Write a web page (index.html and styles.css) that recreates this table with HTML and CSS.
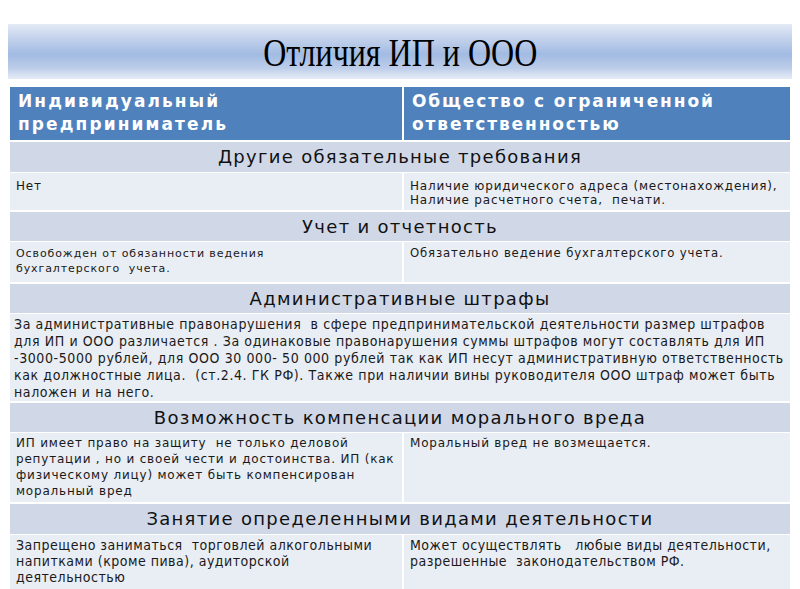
FILE: index.html
```html
<!DOCTYPE html>
<html lang="ru">
<head>
<meta charset="utf-8">
<link rel="stylesheet" href="styles.css">
</head>
<body>
<div class="slide">
  <div class="banner"><h1 class="title">Отличия ИП и ООО</h1></div>
  <div class="table">
    <div class="row head">
      <div class="cell">Индивидуальный<br>предприниматель</div>
      <div class="cell">Общество с ограниченной<br>ответственностью</div>
    </div>
    <div class="sect tall">Другие обязательные требования</div>
    <div class="row data r1">
      <div class="cell">Нет</div>
      <div class="cell">Наличие юридического адреса (местонахождения),<br>Наличие расчетного счета,&nbsp; печати.</div>
    </div>
    <div class="sect">Учет и отчетность</div>
    <div class="row data r2">
      <div class="cell">Освобожден от обязанности ведения<br>бухгалтерского&nbsp; учета.</div>
      <div class="cell alt">Обязательно ведение бухгалтерского учета.</div>
    </div>
    <div class="sect">Административные штрафы</div>
    <div class="row data r3">
      <div class="cell wide">За административные правонарушения&nbsp; в сфере предпринимательской деятельности размер штрафов<br>для ИП и ООО различается . За одинаковые правонарушения суммы штрафов могут составлять для ИП<br>-3000-5000 рублей, для ООО 30 000- 50 000 рублей так как ИП несут административную ответственность<br>как должностные лица.&nbsp; (ст.2.4. ГК РФ). Также при наличии вины руководителя ООО штраф может быть<br>наложен и на него.</div>
    </div>
    <div class="sect">Возможность компенсации морального вреда</div>
    <div class="row data r4">
      <div class="cell">ИП имеет право на защиту&nbsp; не только деловой<br>репутации , но и своей чести и достоинства. ИП (как<br>физическому лицу) может быть компенсирован<br>моральный вред</div>
      <div class="cell">Моральный вред не возмещается.</div>
    </div>
    <div class="sect tall">Занятие определенными видами деятельности</div>
    <div class="row data r5">
      <div class="cell">Запрещено заниматься&nbsp; торговлей алкогольными<br>напитками (кроме пива), аудиторской<br>деятельностью</div>
      <div class="cell">Может осуществлять&nbsp;&nbsp; любые виды деятельности,<br>разрешенные&nbsp; законодательством РФ.</div>
    </div>
  </div>
</div>
</body>
</html>
```
FILE: styles.css
```css
html, body {
  margin: 0;
  padding: 0;
  background: #ffffff;
}
*, *::before, *::after {
  box-sizing: border-box;
}
body {
  width: 800px;
  height: 589px;
  overflow: hidden;
  font-family: "DejaVu Sans", Verdana, sans-serif;
  color: #000;
}
.slide {
  padding: 24px 8px 0 8px;
  display: flex;
  flex-direction: column;
}
.banner {
  height: 55px;
  background: linear-gradient(to bottom, #e3e9f5 0%, #b9cbe9 35%, #a2bbe2 55%, #bccde9 80%, #e6ecf6 100%);
  display: flex;
  align-items: center;
  justify-content: center;
}
.title {
  margin: 2px 0 0 0;
  font-family: "Liberation Serif", "Times New Roman", serif;
  font-weight: normal;
  font-size: 40px;
  line-height: 1;
  transform: scaleX(0.8);
  color: #000;
}
.table {
  margin: 8px 2px 0 2px;
  display: flex;
  flex-direction: column;
  gap: 1px;
}
.row {
  display: grid;
  grid-template-columns: 392px 1fr;
  gap: 2px;
  margin-bottom: 1px;
}
.cell {
  padding: 4px 6px;
}
.head .cell {
  background: #4f81bd;
  color: #fff;
  font-weight: bold;
  font-size: 17px;
  line-height: 23px;
  height: 53px;
  padding: 3px 8px 0 8px;
}
.head .cell:first-child {
  letter-spacing: 2.1px;
}
.head .cell:last-child {
  letter-spacing: 1.9px;
}
.sect {
  background: #d0d8e8;
  text-align: center;
  font-size: 18px;
  letter-spacing: 1.3px;
  height: 29px;
  line-height: 29px;
  color: #111;
}
.sect.tall {
  height: 30px;
  line-height: 30px;
}
.data .cell {
  background: #e9edf4;
  color: #1a1a1a;
}
.r1 .cell {
  height: 37px;
  font-size: 12px;
  letter-spacing: 0.8px;
  line-height: 14px;
  padding: 6px 6px 0 6px;
}
.r2 .cell {
  height: 40px;
  font-size: 11px;
  letter-spacing: 0.9px;
  line-height: 15px;
  padding: 4px 6px 0 6px;
}
.r2 .cell.alt {
  font-size: 11.7px;
  letter-spacing: 0.85px;
}
.r3 .cell {
  height: 87px;
}
.cell.wide {
  grid-column: 1 / span 2;
  font-family: "DejaVu Sans Condensed", "DejaVu Sans", sans-serif;
  font-stretch: condensed;
  font-size: 14px;
  letter-spacing: 0.6px;
  line-height: 17px;
  padding: 2px 4px 0 4px;
}
.r4 .cell {
  height: 69px;
  font-size: 12px;
  letter-spacing: 0.8px;
  line-height: 16px;
  padding: 2px 6px 0 6px;
}
.r5 .cell {
  height: 56px;
  font-family: "DejaVu Sans Condensed", "DejaVu Sans", sans-serif;
  font-stretch: condensed;
  font-size: 14px;
  letter-spacing: 0.5px;
  line-height: 16px;
  padding: 2px 6px 0 6px;
}
```
